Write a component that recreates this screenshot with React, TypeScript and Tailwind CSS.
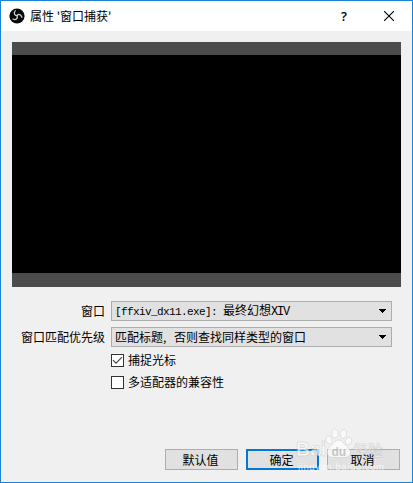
import type { ReactNode } from 'react';

function ObsLogo() {
  return (
    <svg className="h-4 w-4 shrink-0" viewBox="0 0 16 16">
      <circle cx="8" cy="8" r="7.6" fill="#080808" />
      <g fill="none" stroke="#d0d0d0" strokeWidth="1.3" strokeLinecap="round">
        <path d="M6.2 2.8C4.3 5 5.6 7.4 8 7.6" />
        <path d="M12.9 9.2C12 6.2 9.5 5.6 8 7.6" />
        <path d="M4 11C6.6 12.6 9.2 10.6 8 7.6" />
      </g>
    </svg>
  );
}

function Combo({ children }: { children: ReactNode }) {
  return (
    <div className="flex h-5 w-[281px] items-center justify-between border border-[#adadad] bg-[#e1e1e1] pr-[5px] pl-[3px]">
      <span className="whitespace-pre">{children}</span>
      <svg className="h-1 w-[7px]" viewBox="0 0 7 4" shapeRendering="crispEdges">
        <path d="M0 0H7V1H6V2H5V3H4V4H3V3H2V2H1V1H0Z" />
      </svg>
    </div>
  );
}

function CheckRow({ label, checked }: { label: string; checked?: boolean }) {
  return (
    <div className="flex h-[22px] items-center gap-1">
      <span className="h-[13px] w-[13px] border border-[#333] bg-white">
        {checked && (
          <svg className="block h-[11px] w-[11px]" viewBox="0 0 11 11" fill="none" stroke="#444" strokeWidth="1.2">
            <path d="M1 5.2L4 8.2L10 2.2" />
          </svg>
        )}
      </span>
      <span>{label}</span>
    </div>
  );
}

function Button({ label, primary }: { label: string; primary?: boolean }) {
  return (
    <button
      className={`flex h-[21px] w-[73px] items-center justify-center bg-[#e1e1e1] pr-[2px] ${
        primary ? 'border-2 border-[#0078d7]' : 'border border-[#adadad]'
      }`}
    >
      <span className="relative z-10">{label}</span>
    </button>
  );
}

function Watermark() {
  return (
    <svg
      className="pointer-events-none absolute top-[427px] left-[293px] h-[46px] w-[94px]"
      viewBox="0 0 94 46"
      fill="#fff"
      stroke="#bbb"
      strokeWidth=".5"
      opacity=".7"
    >
      <text x="2" y="28" fontSize="20" fontWeight="bold" fontFamily="Liberation Sans, sans-serif" textLength="30" lengthAdjust="spacingAndGlyphs">Bai</text>
      <ellipse cx="35" cy="12" rx="3" ry="4" transform="rotate(-15 35 12)" />
      <ellipse cx="41" cy="5.5" rx="3" ry="4.4" />
      <ellipse cx="49.5" cy="6" rx="3" ry="4.4" transform="rotate(12 49.5 6)" />
      <ellipse cx="54.5" cy="13" rx="3" ry="3.8" transform="rotate(18 54.5 13)" />
      <path d="M44.5 12C41 12 40 16 36.5 18C31 21.5 32.5 29.5 38.5 29.5H51C57.5 29.5 58 22 53 18.5C49 15.5 48 12 44.5 12Z" />
      <text x="37.5" y="27.5" fontSize="12" fontWeight="bold" fontFamily="Liberation Sans, sans-serif" fill="#bbb" stroke="none">du</text>
      <text x="59" y="27.5" fontSize="15" fontWeight="500" fontFamily="Noto Sans CJK SC, sans-serif" textLength="30">经验</text>
      <text x="4" y="41.5" fontSize="9.5" fontFamily="Liberation Sans, sans-serif" textLength="86" stroke="none">jingyan.baidu.com</text>
    </svg>
  );
}

export default function App() {
  return (
    <main className="relative flex h-[483px] w-[413px] flex-col border border-[#1883d7] bg-[#f0f0f0] font-['Noto_Sans_CJK_SC',sans-serif] text-[12px] leading-[18px] text-black">
      <header className="flex h-[30px] shrink-0 items-center bg-white pl-2">
        <ObsLogo />
        <h1 className="ml-[5px] grow whitespace-pre font-normal">属性 '窗口捕获'</h1>
        <span className="mr-[37px] font-['Open_Sans',sans-serif] text-[13px] font-semibold">?</span>
        <svg className="mr-[18px] h-[10px] w-[10px]" viewBox="0 0 10 10" stroke="#000" strokeWidth="1.1">
          <path d="M0 0L10 10M10 0L0 10" />
        </svg>
      </header>
      <div className="mt-[11px] ml-[11px] h-[245px] w-[389px] shrink-0 border-t-[13px] border-b-[14px] border-[#4c4c4c] bg-black" />
      <div className="mt-[14px] flex items-center gap-[6px]">
        <span className="w-[104px] text-right">窗口</span>
        <Combo>
          <span className="font-['Liberation_Mono',monospace] text-[11px] tracking-[-0.6px]">[ffxiv_dx11.exe]: </span>
          最终幻想
          <span className="font-['Liberation_Mono',monospace] text-[12px] tracking-[-1.2px]">XIV</span>
        </Combo>
      </div>
      <div className="mt-[6px] flex items-center gap-[6px]">
        <span className="w-[104px] text-right">窗口匹配优先级</span>
        <Combo>匹配标题, <span className="ml-[5px]">否则查找同样类型的窗口</span></Combo>
      </div>
      <div className="mt-[2px] ml-[110px]">
        <CheckRow label="捕捉光标" checked />
        <CheckRow label="多适配器的兼容性" />
      </div>
      <footer className="mt-auto mr-3 mb-3 flex justify-end gap-2">
        <Button label="默认值" />
        <Button label="确定" primary />
        <Button label="取消" />
      </footer>
      <Watermark />
    </main>
  );
}
